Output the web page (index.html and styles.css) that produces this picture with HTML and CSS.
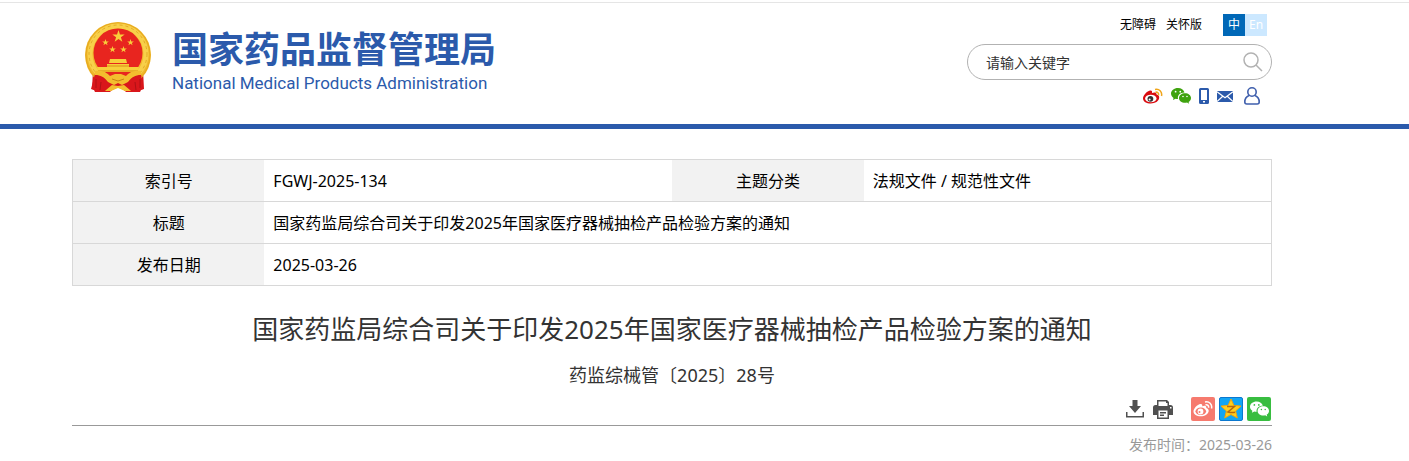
FILE: index.html
```html
<!DOCTYPE html>
<html lang="zh-CN">
<head>
  <meta charset="UTF-8" />
  <meta name="viewport" content="width=device-width, initial-scale=1.0"/>
  <title>国家药监局综合司关于印发2025年国家医疗器械抽检产品检验方案的通知</title>
  <link rel="stylesheet" href="styles.css">
</head>
<body>

<!-- shared icon shapes -->
<svg class="sprite" aria-hidden="true">
  <symbol id="star" viewBox="-10 -10 20 20">
    <path d="M0-10 2.300-3.100 9.500-3.100 3.700 1.200 5.900 8.100 0 3.800-5.900 8.100-3.700 1.200-9.500-3.100-2.300-3.100z"/>
  </symbol>
  <symbol id="wechat" viewBox="0 0 20 16">
    <path fill="currentColor" fill-rule="evenodd" d="M7 0C3 0 0 2.500 0 5.600c0 1.800 1 3.300 2.500 4.300L2 12l2.500-1.300c.8.200 1.600.3 2.500.3-.8-3.800 2.400-6.600 6.500-6.500C12.900 1.800 10.200 0 7 0zM4.600 2.800a.9.900 0 1 1 0 1.800.9.900 0 0 1 0-1.800zm4.700 0a.9.900 0 1 1 0 1.800.9.900 0 0 1 0-1.800z"/>
    <path fill="currentColor" fill-rule="evenodd" d="M14 5.200c-3.400 0-6 2.100-6 4.800s2.600 4.800 6 4.800c.7 0 1.400-.1 2-.3l2.100 1.300-.5-1.900C19.100 13 20 11.600 20 10c0-2.700-2.600-4.800-6-4.800zM12 7.700a.8.800 0 1 1 0 1.600.8.800 0 0 1 0-1.600zm4 0a.8.800 0 1 1 0 1.600.8.800 0 0 1 0-1.600z"/>
  </symbol>
</svg>

<header class="header">
  <a class="brand" href="#">
    <svg class="emblem" viewBox="0 0 68 72" aria-hidden="true">
      <path fill="#d9161b" d="M9 49 8 68l3 1 1 2h14l8-8 8 8h14l1-2 3-1-1-19z"/>
      <circle cx="34" cy="34" r="33" fill="#f0b92c"/>
      <circle cx="34" cy="34" r="32" fill="none" stroke="#e6a81f"/>
      <circle cx="34" cy="33" r="28" fill="none" stroke="#f8d04a" stroke-width="5"/>
      <circle cx="34" cy="33" r="29" fill="none" stroke="#e3ab27" stroke-dasharray="3 3"/>
      <circle cx="34" cy="32" r="24.500" fill="#e8251f"/>
      <g fill="#f8cf3b">
        <use href="#star" x="28" y="9" width="13" height="13"/>
        <use href="#star" x="18" y="18" width="7" height="7"/>
        <use href="#star" x="43" y="18" width="7" height="7"/>
        <use href="#star" x="25" y="25" width="7" height="7"/>
        <use href="#star" x="36" y="25" width="7" height="7"/>
        <path d="M26 38h16l1 4H25zM23 43h22v3h10l-1 5H14l-1-5h10z"/>
      </g>
      <path stroke="#d98e17" d="M14 50h40M23 45h22"/>
      <path fill="#d9161b" d="M11 53c6-1 10 1 14 6l9-1 9 1c4-5 8-7 14-6l2 15-3 1-1 2H44l-10-5-10 5H11l-1-2-3-1z"/>
      <path fill="#f3be2e" d="M11 50c8-1 12 2 15 5l5-2h6l5 2c3-3 7-6 15-5v4c-6 0-9 2-13 7l-6 3-4-2-4 2-6-3c-4-5-7-7-13-7z"/>
      <path fill="#f3be2e" d="m22 69 6-5 6 1 6-1 6 5 1 1h-6l-7-3-7 3h-6z"/>
      <path fill="none" stroke="#b01015" d="M12 58v9M17 61l-1 8M56 58v9M51 61l1 8"/>
      <path fill="none" stroke="#c98314" d="m28 58 6 2 6-2"/>
    </svg>
    <span class="brand-text">
      <span class="brand-cn">国家药品监督管理局</span>
      <span class="brand-en">National Medical Products Administration</span>
    </span>
  </a>

  <div class="tools">
    <div class="top-links">
      <a href="#">无障碍</a>
      <a href="#">关怀版</a>
      <span class="lang"><a class="lang-cn" href="#">中</a><a class="lang-en" href="#">En</a></span>
    </div>
    <form class="search">
      <input type="text" placeholder="请输入关键字" aria-label="请输入关键字" />
      <button type="button" aria-label="搜索">
        <svg width="20" height="20" viewBox="0 0 20 20" fill="none" stroke="#b2b2b2" stroke-width="1.500">
          <circle cx="8" cy="8" r="7"/>
          <path d="m13 13 6 6"/>
        </svg>
      </button>
    </form>
    <nav class="contacts">
      <a href="#" aria-label="微博">
        <svg width="20" height="16" viewBox="0 0 20 16">
          <path fill="#d90b0f" d="M7.500 2.500C9 2.300 9.300 3.400 9 5c2-.9 4.700-.9 4.600 1.600 1.800.5 2.700 1.400 2.600 3.200C16 13.200 12 15.500 7.800 15.500 3.500 15.500 0 13.500 0 10.500c0-3.200 4-7.600 7.500-8z"/>
          <ellipse cx="7.800" cy="10.500" rx="5.700" ry="3.800" fill="#fff"/>
          <circle cx="7.400" cy="10.800" r="2.900" fill="#333"/>
          <circle cx="6.600" cy="11.500" r="1" fill="#fff"/>
          <path fill="none" stroke="#f0a51b" stroke-width="1.500" d="M12 1.500c4-1 7.500 2 6.500 6.500M12.500 4.200c2-.4 3.500 1 3 3"/>
        </svg>
      </a>
      <a class="green" href="#" aria-label="微信"><svg width="20" height="16"><use href="#wechat"/></svg></a>
      <a href="#" aria-label="手机版">
        <svg width="10" height="16" viewBox="0 0 10 16">
          <path fill="#2b5aab" fill-rule="evenodd" d="M1.500 0h7Q10 0 10 1.500v13Q10 16 8.500 16h-7Q0 16 0 14.500v-13Q0 0 1.500 0zM2 2v10h6V2zm2 11v1.500h2V13z"/>
        </svg>
      </a>
      <a href="#" aria-label="邮箱">
        <svg width="16" height="11" viewBox="0 0 16 11">
          <path fill="#2b5aab" d="M0 0h16v11H0z"/>
          <path fill="none" stroke="#fff" stroke-width="1.200" d="m0 .8 8 6 8-6M0 10.500l5.500-5M16 10.500l-5.500-5"/>
        </svg>
      </a>
      <a class="user" href="#" aria-label="个人中心">
        <svg width="16" height="18" viewBox="0 0 16 18" fill="none" stroke="#3f5fad" stroke-width="1.600">
          <circle cx="8" cy="5" r="4.200"/>
          <path d="M5 8.500C2.500 9.500.8 12 .8 15q0 2 2 2h10.400q2 0 2-2c0-3-1.700-5.500-4.200-6.500"/>
        </svg>
      </a>
    </nav>
  </div>
</header>

<main class="main">
  <table class="info">
    <tr>
      <th scope="row">索引号</th>
      <td>FGWJ-2025-134</td>
      <th scope="row">主题分类</th>
      <td>法规文件 / 规范性文件</td>
    </tr>
    <tr>
      <th scope="row">标题</th>
      <td colspan="3">国家药监局综合司关于印发2025年国家医疗器械抽检产品检验方案的通知</td>
    </tr>
    <tr>
      <th scope="row">发布日期</th>
      <td colspan="3">2025-03-26</td>
    </tr>
  </table>

  <h1>国家药监局综合司关于印发2025年国家医疗器械抽检产品检验方案的通知</h1>
  <p class="doc-number">药监综械管〔2025〕28号</p>

  <div class="actions">
    <button type="button" aria-label="下载">
      <svg width="18" height="18" viewBox="0 0 18 18" fill="#505050">
        <path d="M6.500 0h5v6H15l-6 7-6-7h3.500z"/>
        <path d="M0 12h1.500v4h15v-4H18v5.500H0z"/>
      </svg>
    </button>
    <button type="button" aria-label="打印">
      <svg width="20" height="20" viewBox="0 0 20 20">
        <path fill="#505050" fill-rule="evenodd" d="M4 1h10l2 2v3h1.500Q20 6 20 8.500V16h-4v4H4v-4H0V8.500Q0 6 2.500 6H4zm1.500 1.500V7h9V4H13V2.500zm0 9V18.500h9v-7zM17 8v1.500h1.500V8z"/>
        <path fill="#505050" d="M7 13h6v1.500H7zM7 15.500h4V17H7z"/>
      </svg>
    </button>
    <div class="share">
      <a class="share-weibo" href="#" aria-label="分享到微博">
        <svg width="20" height="18" viewBox="0 0 20 18">
          <path fill="#fff" d="M7.500 4C9 3.700 9.600 4.700 9.200 6.300c2-.9 4.400-.7 4.100 1.600 1.700.5 2.500 1.600 2.400 3.100-.2 3-3.900 5.300-8 5.300S.5 14.500.5 11.500C.5 8.500 4.300 4.500 7.500 4z"/>
          <ellipse cx="7.800" cy="11.300" rx="5.300" ry="3.700" fill="#f67a6e"/>
          <circle cx="7.500" cy="11.500" r="2.900" fill="#fff"/>
          <circle cx="6.500" cy="12" r="1" fill="#f67a6e"/>
          <path fill="none" stroke="#fff" stroke-width="1.500" d="M12 2c4-1 7.500 2 6.500 6.500M12.500 4.800c2-.4 3.500 1 3 3"/>
        </svg>
      </a>
      <a class="share-qzone" href="#" aria-label="分享到QQ空间">
        <svg width="22" height="22" viewBox="-11 -11 22 22">
          <path fill="#ffce1f" stroke="#f3a50d" stroke-linejoin="round" d="M0-10 2.900-3.600 10-2.900 4.600 2 6.300 9 0 5.500-6.300 9-4.600 2-10-2.900-2.900-3.600z"/>
          <path fill="none" stroke="#b7690f" stroke-width="1.500" d="M-4-2.500h7.500L-3 3c3 .8 5 .8 7 .2"/>
        </svg>
      </a>
      <a class="share-wechat" href="#" aria-label="分享到微信"><svg width="19" height="16"><use href="#wechat"/></svg></a>
    </div>
  </div>

  <p class="publish">发布时间：2025-03-26</p>
</main>

</body>
</html>
```
FILE: styles.css
```css
* {
  box-sizing: border-box;
}

body {
  margin: 0;
  padding-top: 2px;
  background: #fff;
  color: #000;
  font-family: "Noto Sans", "Noto Sans CJK SC", sans-serif;
  font-size: 16px;
}

a {
  color: inherit;
  text-decoration: none;
}

svg {
  display: block;
}

button {
  padding: 0;
  border: none;
  background: none;
  cursor: pointer;
}

.sprite {
  display: none;
}

/* Header */
.header {
  display: flex;
  justify-content: space-between;
  align-items: flex-start;
  padding: 11px 137px 19px 84px;
  border-top: 1px solid #e5e5e5;
  border-bottom: 5px solid #2b5aab;
}

.brand {
  display: flex;
  gap: 20px;
  padding-top: 7px;
  color: #2b5aab;
}

.emblem {
  width: 68px;
  height: 72px;
}

.brand-text {
  display: flex;
  flex-direction: column;
  padding-top: 6px;
}

.brand-cn {
  font-family: "Noto Sans CJK SC", sans-serif;
  font-size: 36px;
  font-weight: 700;
  line-height: 40px;
}

.brand-en {
  font-family: Roboto, sans-serif;
  font-size: 17px;
  line-height: 32px;
}

.tools {
  width: 305px;
}

.top-links {
  display: flex;
  justify-content: flex-end;
  gap: 10px;
  padding-right: 5px;
  font-size: 12px;
  line-height: 22px;
}

.lang {
  display: flex;
  margin-left: 11px;
  color: #fff;
  text-align: center;
}

.lang a {
  width: 22px;
}

.lang-cn {
  background: #0068b7;
}

.lang-en {
  background: #cce8ff;
}

.search {
  display: flex;
  align-items: center;
  height: 36px;
  margin-top: 8px;
  padding: 0 8px 0 18px;
  border: 1px solid #b2b2b2;
  border-radius: 18px;
}

.search input {
  flex: 1;
  min-width: 0;
  padding: 0;
  border: none;
  outline: none;
  background: none;
  font-family: inherit;
  font-size: 14px;
}

.search input::placeholder {
  color: #333;
}

.contacts {
  display: flex;
  justify-content: flex-end;
  align-items: center;
  gap: 8px;
  margin-top: 7px;
  padding-right: 12px;
}

.green {
  color: #3fa30f;
}

.user {
  margin-left: 3px;
}

/* Article */
.main {
  padding: 30px 137px 0 72px;
}

.info {
  width: 100%;
  table-layout: fixed;
  border-collapse: collapse;
  border: 1px solid #d8d8d8;
}

.info th,
.info td {
  height: 42px;
  padding: 0 9px;
  border-bottom: 1px solid #d8d8d8;
  line-height: 24px;
}

.info th {
  width: 16%;
  background: #f2f2f2;
  font-weight: 400;
  text-align: center;
}

h1 {
  margin: 24px 0 0;
  color: #333;
  font-size: 26px;
  font-weight: 400;
  line-height: 38px;
  text-align: center;
}

.doc-number {
  margin: 12px 0 0;
  color: #333;
  font-size: 18px;
  line-height: 30px;
  text-align: center;
}

.actions {
  display: flex;
  justify-content: flex-end;
  align-items: center;
  gap: 9px;
  margin-top: 7px;
  padding-right: 1px;
  padding-bottom: 4px;
  border-bottom: 1px solid #999;
}

.share {
  display: flex;
  gap: 4px;
  margin-left: 9px;
}

.share a {
  display: flex;
  justify-content: center;
  align-items: center;
  width: 24px;
  height: 24px;
  border-radius: 2px;
}

.share-weibo {
  background: #f67a6e;
}

.share-qzone {
  border: 1px solid #0b78cf;
  background: #12a5f4;
}

.share-wechat {
  background: #38bd40;
  color: #fff;
}

.publish {
  margin: 8px 0 0;
  color: #999;
  font-family: "Noto Sans", "Noto Sans CJK TC", sans-serif;
  font-size: 14px;
  line-height: 22px;
  text-align: right;
}
```
